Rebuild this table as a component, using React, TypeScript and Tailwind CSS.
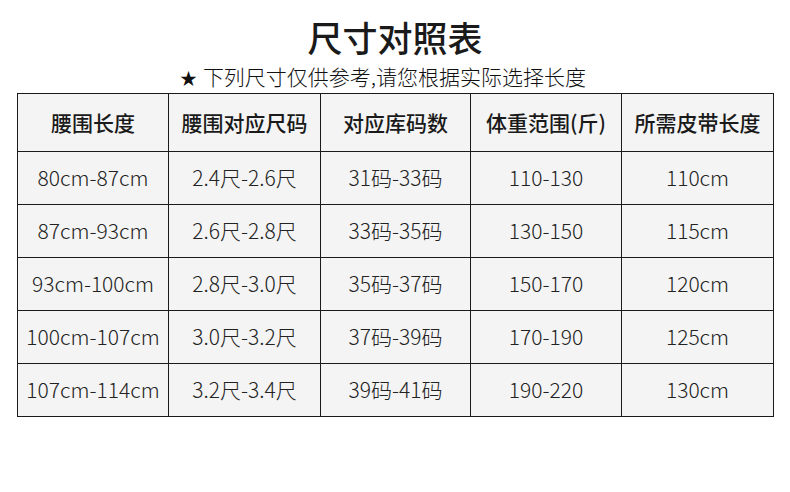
import React from 'react';

const headers = ['腰围长度', '腰围对应尺码', '对应库码数', '体重范围(斤)', '所需皮带长度'];

const rows = [
  ['80cm-87cm', '2.4尺-2.6尺', '31码-33码', '110-130', '110cm'],
  ['87cm-93cm', '2.6尺-2.8尺', '33码-35码', '130-150', '115cm'],
  ['93cm-100cm', '2.8尺-3.0尺', '35码-37码', '150-170', '120cm'],
  ['100cm-107cm', '3.0尺-3.2尺', '37码-39码', '170-190', '125cm'],
  ['107cm-114cm', '3.2尺-3.4尺', '39码-41码', '190-220', '130cm'],
];

const widths = ['w-[151px]', 'w-[152px]', 'w-[150px]', 'w-[151px]', 'w-[152px]'];

const App = () => {
  return (
    <div className="w-[790px] h-[492px] bg-white font-['Noto_Sans_CJK_SC','Noto_Sans',sans-serif] text-[#1a1a1a]">
      <div className="pt-[11px] flex flex-col items-center">
        <h1 className="text-[35px] leading-[52px] font-medium">尺寸对照表</h1>
        <p className="h-[26px] text-[21px] leading-[26px] font-light text-[#111] -ml-[24px]">
          <span className="text-[17px] leading-[26px] font-normal mr-[6px]">★</span>下列尺寸仅供参考,请您根据实际选择长度
        </p>
      </div>

      {/* size table */}
      <table className="ml-[17px] mt-[4px] border-collapse table-fixed">
        <thead>
          <tr className="h-[58px]">
            {headers.map((h, i) => (
              <th
                key={h}
                className={`${widths[i]} border border-[#1a1a1a] bg-[#f4f4f4] text-[21px] font-medium text-center p-0`}
              >
                {h}
              </th>
            ))}
          </tr>
        </thead>
        <tbody>
          {rows.map((row, r) => (
            <tr key={r} className="h-[53px]">
              {row.map((cell, i) => (
                <td
                  key={i}
                  className="border border-[#1a1a1a] bg-[#f4f4f4] text-[21px] font-light text-[#222] text-center p-0 whitespace-nowrap"
                >
                  {cell}
                </td>
              ))}
            </tr>
          ))}
        </tbody>
      </table>
    </div>
  );
};

export default App;
